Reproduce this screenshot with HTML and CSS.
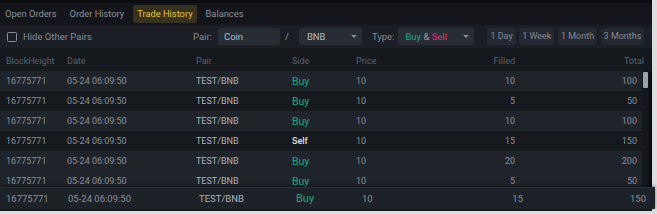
FILE: index.html
```html
<!DOCTYPE html>
<html>
<head>
<meta charset="utf-8">
<link rel="stylesheet" href="styles.css">
</head>
<body>
<div class="panel">
  <div class="tabs">
    <span class="tab">Open Orders</span>
    <span class="tab">Order History</span>
    <span class="tab active">Trade History</span>
    <span class="tab">Balances</span>
  </div>
  <div class="filters">
    <label class="hide"><span class="box"></span>Hide Other Pairs</label>
    <div class="pair">
      <span class="lbl">Pair:</span>
      <span class="input coin">Coin</span>
      <span class="slash">/</span>
      <span class="input select bnb">BNB<i class="caret"></i></span>
    </div>
    <div class="type">
      <span class="lbl">Type:</span>
      <span class="input select typesel"><b class="buy">Buy</b>&nbsp;&amp;&nbsp;<b class="sell">Sell</b><i class="caret"></i></span>
    </div>
    <div class="ranges">
      <span class="btn">1 Day</span>
      <span class="btn">1 Week</span>
      <span class="btn">1 Month</span>
      <span class="btn">3 Months</span>
    </div>
  </div>
  <div class="row head">
    <span>BlockHeight</span><span>Date</span><span>Pair</span><span>Side</span><span>Price</span><span class="r">Filled</span><span class="r">Total</span>
  </div>
  <div class="scroll">
    <div class="list">
      <div class="row odd"><span>16775771</span><span>05-24 06:09:50</span><span class="pr">TEST/BNB</span><span class="buy side">Buy</span><span>10</span><span class="r">10</span><span class="r">100</span></div>
      <div class="row"><span>16775771</span><span>05-24 06:09:50</span><span class="pr">TEST/BNB</span><span class="buy side">Buy</span><span>10</span><span class="r">5</span><span class="r">50</span></div>
      <div class="row odd"><span>16775771</span><span>05-24 06:09:50</span><span class="pr">TEST/BNB</span><span class="buy side">Buy</span><span>10</span><span class="r">10</span><span class="r">100</span></div>
      <div class="row"><span>16775771</span><span>05-24 06:09:50</span><span class="pr">TEST/BNB</span><span class="self side">Self</span><span>10</span><span class="r">15</span><span class="r">150</span></div>
      <div class="row odd"><span>16775771</span><span>05-24 06:09:50</span><span class="pr">TEST/BNB</span><span class="buy side">Buy</span><span>10</span><span class="r">20</span><span class="r">200</span></div>
      <div class="row odd"><span>16775771</span><span>05-24 06:09:50</span><span class="pr">TEST/BNB</span><span class="buy side">Buy</span><span>10</span><span class="r">5</span><span class="r">50</span></div>
    </div>
    <div class="track"><div class="thumb"></div></div>
  </div>
  <div class="row lifted"><span>16775771</span><span>05-24 06:09:50</span><span class="pr">TEST/BNB</span><span class="buy side">Buy</span><span>10</span><span class="r">15</span><span class="r">150</span></div>
</div>
</body>
</html>
```

FILE: styles.css
```css
html, body {
  margin: 0;
  padding: 0;
  background: #dcdddf;
  width: 657px;
  height: 214px;
  overflow: hidden;
  font-family: Roboto, "Liberation Sans", sans-serif;
}
.panel {
  width: 652px;
  height: 211px;
  background: #16191e;
  display: flex;
  flex-direction: column;
}
.tabs {
  height: 25px;
  background: linear-gradient(#0c0d10 0, #0c0d10 3px, #13151a 3px);
  display: flex;
  align-items: center;
  gap: 5px;
  padding: 3px 0 0 1px;
  box-sizing: border-box;
  font-size: 9.3px;
  color: #8d929b;
}
.tab {
  padding: 0 4px;
  height: 18px;
  line-height: 18px;
  border-radius: 2px;
}
.tab.active {
  background: #37321f;
  color: #e8c43e;
}
.filters {
  height: 23px;
  background: #1b1e25;
  display: flex;
  align-items: center;
  font-size: 9.5px;
  color: #858a94;
  padding-left: 7px;
}
.hide {
  display: flex;
  align-items: center;
  gap: 6px;
  width: 186px;
}
.box {
  width: 8px;
  height: 8px;
  border: 1.3px solid #8a8f99;
  border-radius: 1.5px;
}
.pair, .type, .ranges {
  display: flex;
  align-items: center;
}
.lbl { margin-right: 6px; }
.input {
  height: 17px;
  line-height: 17px;
  background: #272c35;
  border-radius: 2px;
  color: #b6bac2;
  box-sizing: border-box;
  padding-left: 6px;
  position: relative;
}
.coin { width: 62px; }
.slash { margin: 0 10px 0 5px; color: #9a9fa8; }
.bnb { width: 63px; padding-left: 8px; }
.type { margin-left: 10px; }
.type .lbl { margin-right: 4px; }
.typesel { width: 76px; padding-left: 7px; color: #9ba0a8; }
.typesel b { font-weight: normal; }
.caret {
  position: absolute;
  right: 5px;
  top: 7px;
  width: 0;
  height: 0;
  border-left: 3.5px solid transparent;
  border-right: 3.5px solid transparent;
  border-top: 3.5px solid #8a8f99;
}
.buy { color: #1eab82; }
.sell { color: #e2337e; }
.ranges { margin-left: 13px; gap: 3.5px; }
.btn {
  height: 17px;
  line-height: 17px;
  background: #242831;
  border-radius: 2px;
  padding: 0 3px;
  color: #858a94;
  font-size: 9px;
}
.row {
  display: grid;
  grid-template-columns: 61px 129px 96px 64px 104px 55px 1fr;
  align-items: center;
  height: 20px;
  padding: 0 6px 0 6px;
  font-size: 9px;
  color: #8b909a;
}
.row.head {
  height: 23px;
  padding-top: 2px;
  box-sizing: border-box;
  padding-right: 8px;
  color: #5c626d;
  background: #15181d;
}
.r { text-align: right; }
.pr { color: #aeb2ba; }
.side { font-size: 10.5px; }
.self { color: #dfe1e5; font-size: 9px; font-weight: 500; }
.scroll {
  display: flex;
  height: 118px;
  overflow: hidden;
}
.list {
  width: 642px;
  display: flex;
  flex-direction: column;
}
.list .row { padding-right: 5px; flex: none; background: #16191e; }
.list .row.odd { background: #1f232a; }
.track {
  flex: 1;
  background: linear-gradient(90deg, #14171c 0, #14171c 7px, #0a0b0e 7px);
}
.thumb {
  width: 5px;
  height: 16px;
  margin: 1px 0 0 1px;
  background: #9da2aa;
  border-radius: 1px;
}
.row.lifted {
  flex: none;
  margin-top: -2px;
  width: 655px;
  height: 22px;
  box-sizing: border-box;
  grid-template-columns: 62px 131px 97px 66px 106px 55px 1fr;
  padding-right: 9px;
  background: #1d2128;
  border-top: 1px solid #2b2f38;
  box-shadow: 0 -1px 3px rgba(0,0,0,0.5);
  font-size: 9.5px;
  position: relative;
  z-index: 1;
}
.row.lifted .side { font-size: 11px; }
```
